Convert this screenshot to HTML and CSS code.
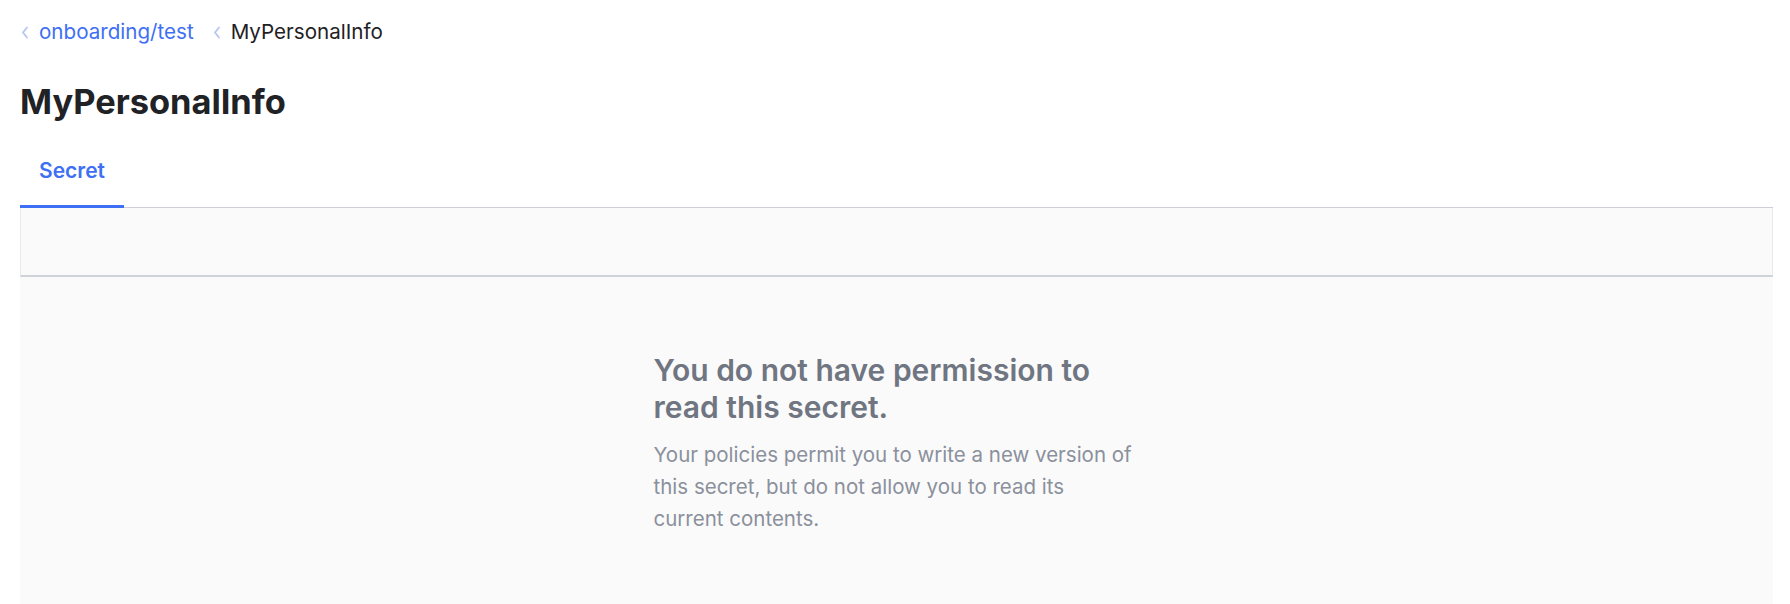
FILE: index.html
```html
<!DOCTYPE html>
<html lang="en">
<head>
<meta charset="utf-8">
<title>MyPersonalInfo</title>
<link rel="stylesheet" href="styles.css">
</head>
<body>
<div class="page">
  <nav class="breadcrumbs">
    <span class="crumb">
      <svg class="chev" width="8" height="13" viewBox="0 0 8 13"><polyline points="6,1.5 2,6.5 6,11.5" fill="none" stroke="currentColor" stroke-width="1.8" stroke-linecap="round" stroke-linejoin="round"/></svg>
      <a class="crumb-link" href="#">onboarding/test</a>
    </span>
    <span class="crumb">
      <svg class="chev" width="8" height="13" viewBox="0 0 8 13"><polyline points="6,1.5 2,6.5 6,11.5" fill="none" stroke="currentColor" stroke-width="1.8" stroke-linecap="round" stroke-linejoin="round"/></svg>
      <span class="crumb-current">MyPersonalInfo</span>
    </span>
  </nav>
  <h1 class="title">MyPersonalInfo</h1>
  <div class="tabs">
    <a class="tab is-active" href="#">Secret</a>
  </div>
  <div class="toolbar"></div>
  <div class="content">
    <div class="empty">
      <h2 class="empty-title">You do not have permission to read this secret.</h2>
      <p class="empty-body">Your policies permit you to write a new version of this secret, but do not allow you to read its current contents.</p>
    </div>
  </div>
</div>
</body>
</html>
```
FILE: styles.css
```css
* { box-sizing: border-box; }
html, body { margin: 0; padding: 0; background: #ffffff; }
body {
  font-family: Inter, "Noto Sans", "Liberation Sans", sans-serif;
  color: #1f2124;
}
.page {
  padding: 20px 17px 0 20px;
  min-height: 604px;
  display: flex;
  flex-direction: column;
}
.breadcrumbs {
  display: flex;
  align-items: center;
  gap: 18px;
  font-size: 20.6px;
  line-height: 24px;
}
.crumb {
  display: flex;
  align-items: center;
  gap: 10px;
}
.chev { color: #b6c4f3; display: block; margin-left: 1px; }
.crumb-link { color: #3e6ff4; text-decoration: none; }
.crumb-current { color: #1f2124; }
.title {
  margin: 38px 0 0 0;
  font-size: 34.4px;
  line-height: 40px;
  font-weight: 700;
  color: #202226;
}
.tabs {
  margin-top: 37px;
  display: flex;
  border-bottom: 1px solid #cdd0d7;
}
.tab {
  display: block;
  padding: 0 19px 22px 19px;
  margin-bottom: -1px;
  border-bottom: 3px solid #3e6ff4;
  font-size: 21px;
  line-height: 24px;
  font-weight: 600;
  color: #3e6ff4;
  text-decoration: none;
}
.toolbar {
  height: 69px;
  background: #fafafa;
  border-left: 1px solid #e8e9ed;
  border-right: 1px solid #e8e9ed;
  border-bottom: 2px solid #cfd2d9;
}
.content {
  flex: 1;
  background: #fafafa;
  display: flex;
  justify-content: center;
  padding-top: 75px;
}
.empty {
  width: 486px;
}
.empty-title {
  margin: 0;
  font-size: 30px;
  line-height: 37px;
  font-weight: 600;
  color: #6f7581;
}
.empty-body {
  margin: 13px 0 0 0;
  font-size: 20.5px;
  line-height: 32px;
  color: #8a909c;
}
```
